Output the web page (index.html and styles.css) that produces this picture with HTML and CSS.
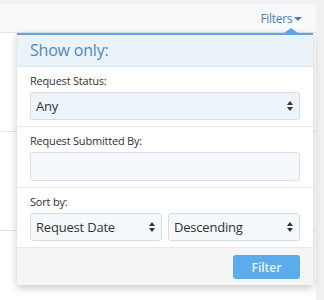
FILE: index.html
```html
<!DOCTYPE html>
<html>
<head>
    <title>Requests</title>
    <link rel="stylesheet" href="styles.css">
</head>
<body>
    <div class="page">
        <div class="toolbar">
            <a class="filters-toggle">Filters <span class="caret"></span></a>
        </div>
        <div class="list">
            <div class="row"></div>
            <div class="row"></div>
        </div>

        <div class="filter-menu">
            <div class="menu-head">Show only:</div>
            <div class="menu-section">
                <label>Request Status:</label>
                <div class="select-box"><span>Any</span><span class="updown"></span></div>
            </div>
            <div class="menu-section">
                <label>Request Submitted By:</label>
                <input type="text" class="text-box">
            </div>
            <div class="menu-section">
                <label>Sort by:</label>
                <div class="sort-row">
                    <div class="select-box"><span>Request Date</span><span class="updown"></span></div>
                    <div class="select-box"><span>Descending</span><span class="updown"></span></div>
                </div>
            </div>
            <div class="menu-foot">
                <button type="button" class="filter-btn">Filter</button>
            </div>
        </div>
    </div>
</body>
</html>
```

FILE: styles.css
```css
body { margin: 0; background: #f1f1f1; font-family: "Open Sans", "Noto Sans", sans-serif; color: #333; }
.page { position: relative; width: 316px; height: 296px; margin-top: 4px; background: #fff; }
.toolbar { height: 28px; background: #f7f9fb; border-bottom: 1px solid #e2e6ea; display: flex; justify-content: flex-end; align-items: center; padding-right: 14px; }
.filters-toggle { font-size: 12px; color: #4a7fae; letter-spacing: -0.3px; }
.caret { display: inline-block; width: 0; height: 0; border-left: 4px solid transparent; border-right: 4px solid transparent; border-top: 4px solid #4a7fae; vertical-align: 2px; margin-left: -1px; }
.list .row { height: 98px; border-bottom: 1px solid #e4e4e4; }

.filter-menu { position: absolute; left: 17px; top: 29px; width: 296px; background: #fff; border-top: 2px solid #5aa5e2; box-shadow: 0 3px 8px rgba(0, 0, 0, 0.22); }
.filter-menu::before { content: ""; position: absolute; top: -7px; left: 267px; border-left: 7px solid transparent; border-right: 7px solid transparent; border-bottom: 5px solid #5aa5e2; }
.menu-head { height: 31px; line-height: 31px; padding: 0 13px; background: #eaf2fa; border-bottom: 1px solid #dde6ef; font-size: 16px; color: #5288ba; letter-spacing: -0.2px; }
.menu-section { padding: 6px 13px 6px; border-bottom: 1px solid #e8e8e8; }
.menu-section label { display: block; font-size: 11px; line-height: 15px; margin-bottom: 4px; color: #333; letter-spacing: -0.2px; }
.select-box { height: 28px; box-sizing: border-box; border: 1px solid #d4dde6; border-radius: 3px; background: #eef4fb; display: flex; align-items: center; justify-content: space-between; padding: 0 6px 0 5px; font-size: 13px; color: #333; letter-spacing: -0.2px; }
.updown { position: relative; width: 6px; height: 10px; }
.updown::before, .updown::after { content: ""; position: absolute; left: 0; border-left: 3px solid transparent; border-right: 3px solid transparent; }
.updown::before { top: 0; border-bottom: 4px solid #333; }
.updown::after { bottom: 0; border-top: 4px solid #333; }
.text-box { display: block; width: 100%; height: 29px; box-sizing: border-box; border: 1px solid #d8e0e8; border-radius: 3px; background: #f5f9fd; margin: 0; }
.sort-row { display: flex; gap: 6px; }
.sort-row .select-box { flex: 1; background: #f6f9fc; }
.menu-foot { background: #f5f5f5; padding: 7px 13px 6px; display: flex; justify-content: flex-end; }
.filter-btn { width: 67px; height: 24px; border: none; border-radius: 3px; background: #5aaceb; color: #eaf4fd; font-family: inherit; font-size: 12px; font-weight: 600; }
```
